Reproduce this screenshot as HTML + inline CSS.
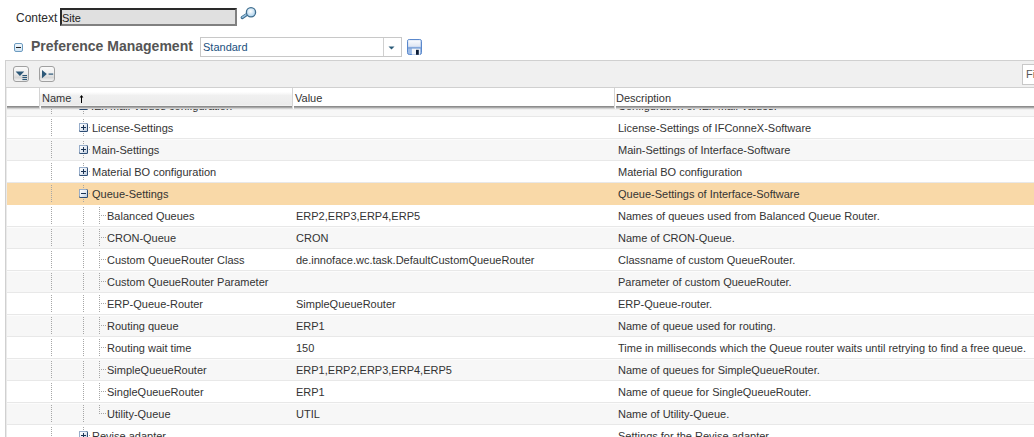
<!DOCTYPE html>
<html><head><meta charset="utf-8">
<style>
*{box-sizing:border-box;margin:0;padding:0}
html,body{width:1034px;height:437px;overflow:hidden;background:#fff;font-family:"Liberation Sans",sans-serif;color:#333;position:relative}
.a{position:absolute;white-space:nowrap}
.t11{font-size:11px;line-height:22px}
#ctxlbl{left:16px;top:9px;font-size:12px;line-height:18px;color:#2a2a2a}
#ctxin{left:60px;top:8px;width:177px;height:18px;background:#e0e0e0;border-style:solid;border-width:2px;border-color:#2a2a2a #808080 #808080 #2a2a2a}
#ctxin span{position:absolute;left:0;top:0;font-size:11px;line-height:16px;color:#222}
#title{left:31px;top:37px;font-size:14px;font-weight:bold;line-height:18px;color:#555}
#sel{left:200px;top:37px;width:202px;height:20px;border:1px solid #c8c8c8;background:#fff}
#sel .txt{position:absolute;left:2px;top:0;font-size:11px;line-height:18px;color:#20507e}
#sel .sep{position:absolute;left:182px;top:0;width:1px;height:18px;background:#d0d0d0}
#toolbar{left:5px;top:60px;width:1029px;height:28px;background:#f0f0f0;border-top:1px solid #d0d0d0;border-left:1px solid #d0d0d0;border-bottom:1px solid #d0d0d0}
.btn{position:absolute;width:16px;height:16px;border:1px solid #a0a0a0;border-radius:3px;background:linear-gradient(#fafafa 0%,#eee 45%,#d8d8d8 75%,#f4f4f4 100%)}
#filter{left:1022px;top:64px;width:20px;height:21px;border:1px solid #c8c8c8;background:#fff}
#filter span{position:absolute;left:3px;top:1px;font-size:11px;line-height:16px;color:#555}
#leftb{left:5px;top:88px;width:1px;height:349px;background:#d0d0d0}
#hdr{left:6px;top:88px;width:1028px;height:19px;background:#fff}
.hc{position:absolute;top:0;height:18px;font-size:11px;line-height:20px;color:#333}
.hsep{position:absolute;top:0;width:2px;height:20px;background:linear-gradient(90deg,#d4d4d4 50%,#fff 50%)}
#hshadow{left:6px;top:106px;width:1028px;height:4px;background:linear-gradient(#8c8c8c 0 25%,#a8a8a8 25% 50%,#d2d2d2 50% 75%,rgba(0,0,0,.04) 75%)}
.row{position:absolute;left:6px;width:1028px;height:22px;border-bottom:1px solid #e8e8e8}
.alt{background:#f7f7f7;box-shadow:inset 0 1px 0 #fcfcfc}
.sel{background:#f9d9a8;border-bottom-color:#f9d9a8}
.c{position:absolute;top:0;font-size:11px;line-height:22px;color:#333;white-space:nowrap}
.dv{position:absolute;width:1px;background-image:linear-gradient(#a6a6a6 50%,transparent 50%);background-size:1px 2px}
.dh{position:absolute;height:1px;background-image:linear-gradient(90deg,#a6a6a6 50%,transparent 50%);background-size:2px 1px}
.ico{position:absolute;width:9px;height:9px}
</style></head><body>
<div id="ctxlbl" class="a">Context</div>
<div id="ctxin" class="a"><span>Site</span></div>
<svg class="a" style="left:239px;top:4px" width="20" height="16" viewBox="0 0 20 16">
<defs><radialGradient id="mg" cx="0.45" cy="0.4" r="0.6"><stop offset="0" stop-color="#ffffff"/><stop offset="1" stop-color="#a9d0ec"/></radialGradient></defs>
<line x1="3.2" y1="13.6" x2="8.2" y2="10.2" stroke="#3d6c8e" stroke-width="3.2" stroke-linecap="round"/>
<line x1="3.3" y1="13.3" x2="7.9" y2="10.2" stroke="#98c2e0" stroke-width="1.4" stroke-linecap="round"/>
<circle cx="12" cy="8.2" r="4.6" fill="url(#mg)" stroke="#3f6d8e" stroke-width="1.3"/>
</svg>
<svg class="a" style="left:14px;top:43px" width="9" height="9" viewBox="0 0 9 9">
<defs><linearGradient id="ming" x1="0" y1="0" x2="0" y2="1"><stop offset="0" stop-color="#f4f9fd"/><stop offset="1" stop-color="#cfe3f3"/></linearGradient></defs>
<rect x="0.5" y="0.5" width="8" height="8" rx="1.5" fill="url(#ming)" stroke="#6d9cc0"/>
<rect x="2" y="4" width="5" height="1" fill="#222"/>
</svg>
<div id="title" class="a">Preference Management</div>
<div id="sel" class="a"><span class="txt">Standard</span><span class="sep"></span>
<svg style="position:absolute;left:187px;top:8px" width="7" height="4" viewBox="0 0 7 4"><path d="M0.5 0.5 L6.5 0.5 L3.5 3.5 Z" fill="#2a5a78"/></svg>
</div>
<svg class="a" style="left:406px;top:38px" width="17" height="18" viewBox="0 0 17 18">
<defs><linearGradient id="sg" x1="0" y1="0" x2="0" y2="1"><stop offset="0" stop-color="#fbfcfe"/><stop offset="1" stop-color="#dde5f3"/></linearGradient></defs>
<rect x="1.5" y="1.5" width="14" height="15" rx="1.8" fill="#9dbbe6" stroke="#5a88cc" stroke-width="1"/>
<rect x="2.2" y="2.2" width="12.3" height="6.6" fill="url(#sg)"/>
<rect x="2" y="9" width="13" height="2" fill="#86a9dc"/>
<rect x="5.9" y="10.7" width="8" height="6" fill="#f4f7fc"/>
<rect x="10" y="11.8" width="2.8" height="5" fill="#0c1c36"/>
</svg>
<div id="toolbar" class="a">
 <div class="btn" style="left:7px;top:5px">
  <svg style="position:absolute;left:0;top:0" width="14" height="14" viewBox="0 0 14 14">
   <path d="M1.6 4.4 L10.2 4.4 L5.9 9 Z" fill="#2c5878"/>
   <rect x="8.4" y="8" width="4.6" height="1.1" fill="#2c5878"/>
   <rect x="8.4" y="10" width="4.6" height="1.1" fill="#2c5878"/>
   <rect x="8.4" y="12" width="4.6" height="1.1" fill="#2c5878"/>
  </svg>
 </div>
 <div class="btn" style="left:33px;top:5px">
  <svg style="position:absolute;left:0;top:0" width="14" height="14" viewBox="0 0 14 14">
   <path d="M2 3 L2 11.2 L6.8 7.1 Z" fill="#2c5878"/>
   <rect x="8.6" y="6.5" width="4.6" height="1.2" fill="#2c5878"/>
  </svg>
 </div>
</div>
<div id="filter" class="a"><span>Filter</span></div>

<div id="rows">
<!-- partial row -->
<div class="row alt" style="top:95px">
 <div class="c" style="left:85px">IEx Mail Values configuration</div>
 <div class="c" style="left:612px">Configuration of IEx Mail Values.</div>
</div>
<div class="row" style="top:117px"><div class="c" style="left:86px">License-Settings</div><div class="c" style="left:612px">License-Settings of IFConneX-Software</div></div>
<div class="row alt" style="top:139px"><div class="c" style="left:86px">Main-Settings</div><div class="c" style="left:612px">Main-Settings of Interface-Software</div></div>
<div class="row" style="top:161px"><div class="c" style="left:86px">Material BO configuration</div><div class="c" style="left:612px">Material BO configuration</div></div>
<div class="row sel" style="top:183px"><div class="c" style="left:86px">Queue-Settings</div><div class="c" style="left:612px">Queue-Settings of Interface-Software</div></div>
<div class="row" style="top:205px"><div class="c" style="left:101px">Balanced Queues</div><div class="c" style="left:290px">ERP2,ERP3,ERP4,ERP5</div><div class="c" style="left:612px">Names of queues used from Balanced Queue Router.</div></div>
<div class="row alt" style="top:227px"><div class="c" style="left:101px">CRON-Queue</div><div class="c" style="left:290px">CRON</div><div class="c" style="left:612px">Name of CRON-Queue.</div></div>
<div class="row" style="top:249px"><div class="c" style="left:101px">Custom QueueRouter Class</div><div class="c" style="left:290px">de.innoface.wc.task.DefaultCustomQueueRouter</div><div class="c" style="left:612px">Classname of custom QueueRouter.</div></div>
<div class="row alt" style="top:271px"><div class="c" style="left:101px">Custom QueueRouter Parameter</div><div class="c" style="left:612px">Parameter of custom QueueRouter.</div></div>
<div class="row" style="top:293px"><div class="c" style="left:101px">ERP-Queue-Router</div><div class="c" style="left:290px">SimpleQueueRouter</div><div class="c" style="left:612px">ERP-Queue-router.</div></div>
<div class="row alt" style="top:315px"><div class="c" style="left:101px">Routing queue</div><div class="c" style="left:290px">ERP1</div><div class="c" style="left:612px">Name of queue used for routing.</div></div>
<div class="row" style="top:337px"><div class="c" style="left:101px">Routing wait time</div><div class="c" style="left:290px">150</div><div class="c" style="left:612px">Time in milliseconds which the Queue router waits until retrying to find a free queue.</div></div>
<div class="row alt" style="top:359px"><div class="c" style="left:101px">SimpleQueueRouter</div><div class="c" style="left:290px">ERP1,ERP2,ERP3,ERP4,ERP5</div><div class="c" style="left:612px">Name of queues for SimpleQueueRouter.</div></div>
<div class="row" style="top:381px"><div class="c" style="left:101px">SingleQueueRouter</div><div class="c" style="left:290px">ERP1</div><div class="c" style="left:612px">Name of queue for SingleQueueRouter.</div></div>
<div class="row alt" style="top:403px"><div class="c" style="left:101px">Utility-Queue</div><div class="c" style="left:290px">UTIL</div><div class="c" style="left:612px">Name of Utility-Queue.</div></div>
<div class="row" style="top:425px"><div class="c" style="left:86px">Revise adapter</div><div class="c" style="left:612px">Settings for the Revise adapter.</div></div>
</div>

<div id="tree"><svg width="0" height="0" style="position:absolute"><defs>
<linearGradient id="ig" x1="0" y1="0" x2="1" y2="1"><stop offset="0" stop-color="#ffffff"/><stop offset="0.5" stop-color="#e6ecf4"/><stop offset="1" stop-color="#bccadc"/></linearGradient>
<g id="ibox"><rect x="0" y="0" width="9" height="9" rx="1.5" fill="#2c4c74"/><rect x="0" y="0" width="8" height="8" rx="1.2" fill="#98aecb"/><rect x="1" y="1" width="7" height="7" fill="url(#ig)"/></g>
<g id="iplus"><use href="#ibox"/><rect x="2" y="4" width="5" height="1" fill="#1a3354"/><rect x="4" y="2" width="1" height="5" fill="#1a3354"/></g>
<g id="imin"><use href="#ibox"/><rect x="2" y="4" width="5" height="1" fill="#1a3354"/></g>
</defs></svg><div class="dv" style="left:51px;top:97px;height:17px"></div><div class="dv" style="left:83px;top:97px;height:17px"></div><div class="dh" style="left:89px;top:105px;width:1px"></div><svg class="ico" style="left:79px;top:101px" width="9" height="9" viewBox="0 0 9 9"><use href="#imin"/></svg><div class="dv" style="left:51px;top:119px;height:17px"></div><div class="dv" style="left:83px;top:119px;height:17px"></div><div class="dh" style="left:89px;top:127px;width:1px"></div><svg class="ico" style="left:79px;top:123px" width="9" height="9" viewBox="0 0 9 9"><use href="#iplus"/></svg><div class="dv" style="left:51px;top:141px;height:17px"></div><div class="dv" style="left:83px;top:141px;height:17px"></div><div class="dh" style="left:89px;top:149px;width:1px"></div><svg class="ico" style="left:79px;top:145px" width="9" height="9" viewBox="0 0 9 9"><use href="#iplus"/></svg><div class="dv" style="left:51px;top:163px;height:17px"></div><div class="dv" style="left:83px;top:163px;height:17px"></div><div class="dh" style="left:89px;top:171px;width:1px"></div><svg class="ico" style="left:79px;top:167px" width="9" height="9" viewBox="0 0 9 9"><use href="#iplus"/></svg><div class="dv" style="left:51px;top:185px;height:17px"></div><div class="dv" style="left:83px;top:185px;height:17px"></div><div class="dh" style="left:89px;top:193px;width:1px"></div><svg class="ico" style="left:79px;top:189px" width="9" height="9" viewBox="0 0 9 9"><use href="#imin"/></svg><div class="dv" style="left:51px;top:207px;height:17px"></div><div class="dv" style="left:83px;top:207px;height:17px"></div><div class="dv" style="left:99px;top:207px;height:17px"></div><div class="dh" style="left:101px;top:215px;width:5px"></div><div class="dv" style="left:51px;top:229px;height:17px"></div><div class="dv" style="left:83px;top:229px;height:17px"></div><div class="dv" style="left:99px;top:229px;height:17px"></div><div class="dh" style="left:101px;top:237px;width:5px"></div><div class="dv" style="left:51px;top:251px;height:17px"></div><div class="dv" style="left:83px;top:251px;height:17px"></div><div class="dv" style="left:99px;top:251px;height:17px"></div><div class="dh" style="left:101px;top:259px;width:5px"></div><div class="dv" style="left:51px;top:273px;height:17px"></div><div class="dv" style="left:83px;top:273px;height:17px"></div><div class="dv" style="left:99px;top:273px;height:17px"></div><div class="dh" style="left:101px;top:281px;width:5px"></div><div class="dv" style="left:51px;top:295px;height:17px"></div><div class="dv" style="left:83px;top:295px;height:17px"></div><div class="dv" style="left:99px;top:295px;height:17px"></div><div class="dh" style="left:101px;top:303px;width:5px"></div><div class="dv" style="left:51px;top:317px;height:17px"></div><div class="dv" style="left:83px;top:317px;height:17px"></div><div class="dv" style="left:99px;top:317px;height:17px"></div><div class="dh" style="left:101px;top:325px;width:5px"></div><div class="dv" style="left:51px;top:339px;height:17px"></div><div class="dv" style="left:83px;top:339px;height:17px"></div><div class="dv" style="left:99px;top:339px;height:17px"></div><div class="dh" style="left:101px;top:347px;width:5px"></div><div class="dv" style="left:51px;top:361px;height:17px"></div><div class="dv" style="left:83px;top:361px;height:17px"></div><div class="dv" style="left:99px;top:361px;height:17px"></div><div class="dh" style="left:101px;top:369px;width:5px"></div><div class="dv" style="left:51px;top:383px;height:17px"></div><div class="dv" style="left:83px;top:383px;height:17px"></div><div class="dv" style="left:99px;top:383px;height:17px"></div><div class="dh" style="left:101px;top:391px;width:5px"></div><div class="dv" style="left:51px;top:405px;height:17px"></div><div class="dv" style="left:83px;top:405px;height:17px"></div><div class="dv" style="left:99px;top:405px;height:9px"></div><div class="dh" style="left:101px;top:413px;width:5px"></div><div class="dv" style="left:51px;top:427px;height:17px"></div><div class="dv" style="left:83px;top:427px;height:17px"></div><div class="dh" style="left:89px;top:435px;width:1px"></div><svg class="ico" style="left:79px;top:431px" width="9" height="9" viewBox="0 0 9 9"><use href="#iplus"/></svg></div>
<!--endtree-->

<div id="hdr" class="a">
 <div class="hc" style="left:0;width:33px;background:#fff"></div>
 <div class="hsep" style="left:33px"></div>
 <div class="hc" style="left:34px;width:252px;background:linear-gradient(#fff 0,#fff 22%,#f0f0f0 42%,#ebebeb 92%,#f6f6f6 100%)"><span style="position:absolute;left:2px">Name</span></div>
 <div class="hsep" style="left:286px"></div>
 <div class="hc" style="left:289px">Value</div>
 <div class="hsep" style="left:608px"></div>
 <div class="hc" style="left:610px">Description</div>
</div>
<div id="hshadow" class="a"></div><div class="a" style="left:39px;top:106px;width:2px;height:3px;background:linear-gradient(90deg,#dadada 50%,#fafafa 50%)"></div><div class="a" style="left:292px;top:106px;width:2px;height:3px;background:linear-gradient(90deg,#dadada 50%,#fafafa 50%)"></div><div class="a" style="left:614px;top:106px;width:2px;height:3px;background:linear-gradient(90deg,#dadada 50%,#fafafa 50%)"></div>
<svg class="a" style="left:78px;top:94px" width="7" height="10" viewBox="0 0 7 10"><path d="M3.5 1 L1.6 3.4 L3 3.4 L3 9 L4 9 L4 3.4 L5.4 3.4 Z" fill="#000"/></svg>
<div id="leftb" class="a"></div><div class="a" style="left:6px;top:88px;width:1px;height:349px;background:#eaeaea"></div>
</body></html>
